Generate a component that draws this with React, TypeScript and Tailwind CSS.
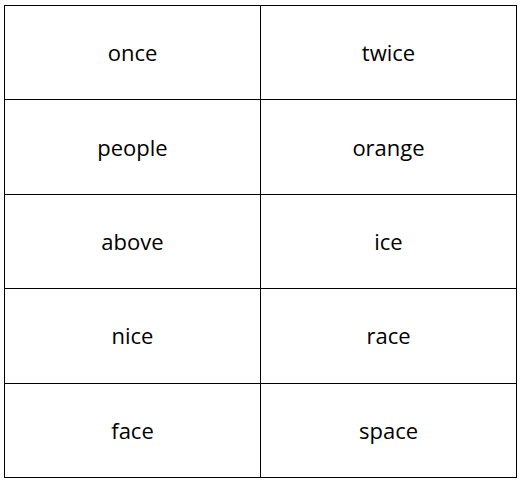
import React from "react";

const words = [
  ["once", "twice"],
  ["people", "orange"],
  ["above", "ice"],
  ["nice", "race"],
  ["face", "space"],
];

export default function App() {
  return (
    <div className="w-[522px] h-[482px] bg-white pl-[4px] pt-[5px]">
      <div
        className="grid grid-cols-[256px_256px] w-[513px] border-l border-t border-black"
        style={{ fontFamily: '"Open Sans", "Liberation Sans", sans-serif' }}
      >
        {words.flat().map((w, i) => (
          <div
            key={i}
            className="h-[94.4px] border-r border-b border-black flex items-center justify-center text-[22px] text-black"
          >
            {w}
          </div>
        ))}
      </div>
    </div>
  );
}
